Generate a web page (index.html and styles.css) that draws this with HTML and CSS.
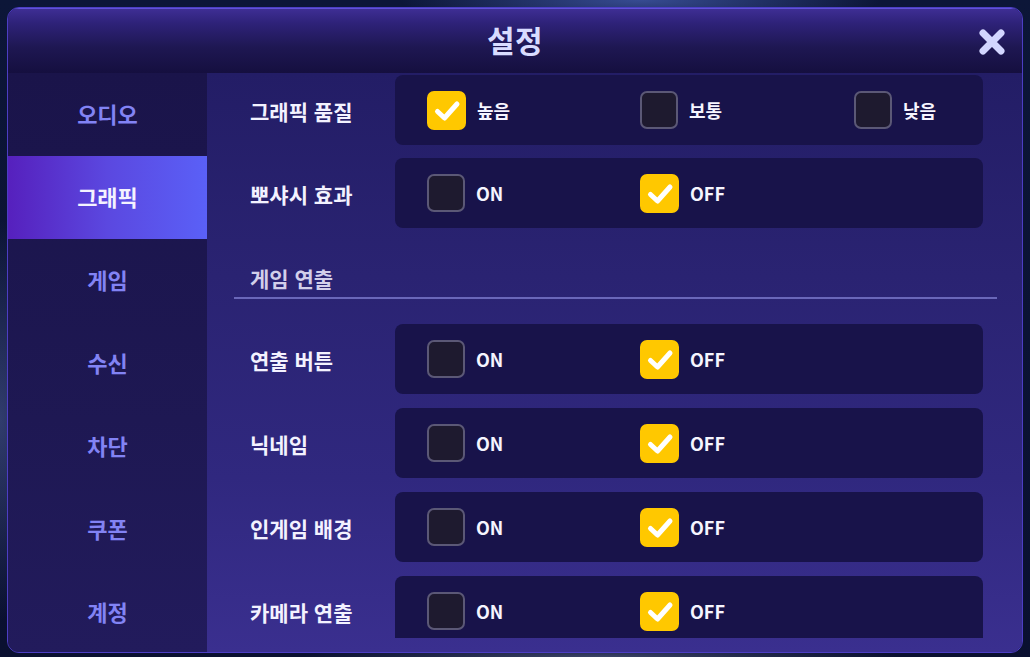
FILE: index.html
```html
<!DOCTYPE html>
<html lang="ko">
<head>
<meta charset="utf-8">
<title>설정</title>
<link rel="stylesheet" href="styles.css">
</head>
<body>
<div class="screen">
  <div class="modal">
    <header class="modal-header">
      <h1 class="modal-title">설정</h1>
      <button class="close-btn" aria-label="닫기">
        <svg width="28" height="28" viewBox="0 0 28 28"><path d="M5 5 L23 23 M23 5 L5 23" stroke="#d3d6ff" stroke-width="7" stroke-linecap="round" fill="none"/></svg>
      </button>
    </header>
    <div class="modal-body">
      <nav class="sidebar">
        <div class="nav-item">오디오</div>
        <div class="nav-item active">그래픽</div>
        <div class="nav-item">게임</div>
        <div class="nav-item">수신</div>
        <div class="nav-item">차단</div>
        <div class="nav-item">쿠폰</div>
        <div class="nav-item">계정</div>
      </nav>
      <main class="content">
        <div class="scroll">
          <div class="group group-top">
            <div class="row">
              <div class="row-label">그래픽 품질</div>
              <div class="row-box">
                <div class="opt"><span class="box checked"><svg viewBox="0 0 38 38"><path d="M9.5 20.5 L16.5 27 L29 13" /></svg></span><span class="opt-label">높음</span></div>
                <div class="opt"><span class="box"></span><span class="opt-label">보통</span></div>
                <div class="opt"><span class="box"></span><span class="opt-label">낮음</span></div>
              </div>
            </div>
            <div class="row">
              <div class="row-label">뽀샤시 효과</div>
              <div class="row-box">
                <div class="opt"><span class="box"></span><span class="opt-label">ON</span></div>
                <div class="opt"><span class="box checked"><svg viewBox="0 0 38 38"><path d="M9.5 20.5 L16.5 27 L29 13" /></svg></span><span class="opt-label">OFF</span></div>
              </div>
            </div>
          </div>

          <div class="section-head">
            <h2 class="section-title">게임 연출</h2>
          </div>

          <div class="group">
            <div class="row">
              <div class="row-label">연출 버튼</div>
              <div class="row-box">
                <div class="opt"><span class="box"></span><span class="opt-label">ON</span></div>
                <div class="opt"><span class="box checked"><svg viewBox="0 0 38 38"><path d="M9.5 20.5 L16.5 27 L29 13" /></svg></span><span class="opt-label">OFF</span></div>
              </div>
            </div>
            <div class="row">
              <div class="row-label">닉네임</div>
              <div class="row-box">
                <div class="opt"><span class="box"></span><span class="opt-label">ON</span></div>
                <div class="opt"><span class="box checked"><svg viewBox="0 0 38 38"><path d="M9.5 20.5 L16.5 27 L29 13" /></svg></span><span class="opt-label">OFF</span></div>
              </div>
            </div>
            <div class="row">
              <div class="row-label">인게임 배경</div>
              <div class="row-box">
                <div class="opt"><span class="box"></span><span class="opt-label">ON</span></div>
                <div class="opt"><span class="box checked"><svg viewBox="0 0 38 38"><path d="M9.5 20.5 L16.5 27 L29 13" /></svg></span><span class="opt-label">OFF</span></div>
              </div>
            </div>
            <div class="row">
              <div class="row-label">카메라 연출</div>
              <div class="row-box">
                <div class="opt"><span class="box"></span><span class="opt-label">ON</span></div>
                <div class="opt"><span class="box checked"><svg viewBox="0 0 38 38"><path d="M9.5 20.5 L16.5 27 L29 13" /></svg></span><span class="opt-label">OFF</span></div>
              </div>
            </div>
          </div>
        </div>
      </main>
    </div>
  </div>
</div>
</body>
</html>
```

FILE: styles.css
```css
* { box-sizing: border-box; }

html, body {
  margin: 0;
  padding: 0;
  width: 1030px;
  height: 657px;
  overflow: hidden;
}

body {
  font-family: "Noto Sans CJK KR", "Noto Sans", sans-serif;
  background: #0b1232;
}

.screen {
  width: 1030px;
  height: 657px;
  padding: 7px 7px 4px 7px;
  background:
    radial-gradient(ellipse 240px 30px at 640px 0px, rgba(90,120,220,0.55), transparent),
    radial-gradient(ellipse 60px 200px at 0px 420px, rgba(120,140,220,0.35), transparent),
    radial-gradient(ellipse 300px 12px at 600px 657px, rgba(120,130,170,0.45), transparent),
    linear-gradient(180deg, #0c1638 0%, #0a1030 100%);
}

.modal {
  width: 1016px;
  height: 646px;
  border: 1px solid #4c3ec4;
  border-radius: 12px;
  overflow: hidden;
  display: flex;
  flex-direction: column;
  background: #1c1650;
}

.modal-header {
  height: 65px;
  flex: none;
  position: relative;
  display: flex;
  align-items: center;
  justify-content: center;
  padding-bottom: 4px;
  background: linear-gradient(180deg, #3e2e94 0%, #2e2279 22%, #1e1752 60%, #150f3f 100%);
  border-top: 1px solid #6152d8;
}

.modal-title {
  margin: 0;
  font-size: 30px;
  font-weight: 700;
  color: #d9dcff;
  letter-spacing: 0.5px;
  line-height: 1;
}

.close-btn {
  position: absolute;
  right: 15px;
  top: 18px;
  width: 30px;
  height: 30px;
  padding: 0;
  border: 0;
  background: none;
  display: flex;
  align-items: center;
  justify-content: center;
}

.modal-body {
  flex: 1;
  display: flex;
  min-height: 0;
}

.sidebar {
  width: 199px;
  flex: none;
  display: flex;
  flex-direction: column;
  overflow: hidden;
  background: linear-gradient(180deg, #1a144a 0%, #1e1853 60%, #221b5c 100%);
}

.nav-item {
  height: 83px;
  flex: none;
  display: flex;
  align-items: center;
  justify-content: center;
  font-size: 22px;
  font-weight: 700;
  color: #8283f4;
  padding-bottom: 4px;
}

.nav-item.active {
  color: #f4f2ff;
  background: linear-gradient(90deg, #5620bd 0%, #5b48e0 50%, #5a60f7 100%);
}

.content {
  flex: 1;
  min-width: 0;
  padding-bottom: 14px;
  background: linear-gradient(180deg, #231d66 0%, #2a2372 35%, #30287f 70%, #3a2f8f 100%);
}

.scroll {
  height: 100%;
  overflow: hidden;
  padding-top: 2px;
}

.group {
  display: flex;
  flex-direction: column;
  gap: 14px;
}

.group-top {
  gap: 13px;
}

.row {
  display: flex;
  align-items: center;
  padding-left: 43px;
}

.row-label {
  width: 145px;
  flex: none;
  font-size: 21px;
  font-weight: 700;
  color: #f3f2ff;
  padding-top: 2px;
}

.row-box {
  width: 588px;
  height: 70px;
  flex: none;
  border-radius: 8px;
  background: #18134a;
  display: grid;
  grid-template-columns: 213px 214px auto;
  align-items: center;
  padding-left: 32px;
}

.opt {
  display: flex;
  align-items: center;
  gap: 11px;
}

.box {
  width: 38px;
  height: 38px;
  flex: none;
  border-radius: 7px;
  background: #1e1a2f;
  border: 2px solid #5b5876;
  display: flex;
  align-items: center;
  justify-content: center;
}

.box.checked {
  background: #ffc800;
  border-color: #ffc800;
  width: 39px;
  height: 39px;
}

.box svg {
  width: 38px;
  height: 38px;
  flex: none;
}

.box svg path {
  fill: none;
  stroke: #ffffff;
  stroke-width: 5;
  stroke-linecap: round;
  stroke-linejoin: round;
}

.opt-label {
  font-size: 18px;
  font-weight: 700;
  color: #f6f5ff;
  line-height: 1;
}

.section-head {
  margin: 36px 25px 25px 27px;
  border-bottom: 2px solid #6a67b9;
  padding-bottom: 5px;
}

.section-title {
  margin: 0;
  padding-left: 16px;
  font-size: 21px;
  font-weight: 700;
  color: #d2cfea;
  line-height: 28px;
}
```
